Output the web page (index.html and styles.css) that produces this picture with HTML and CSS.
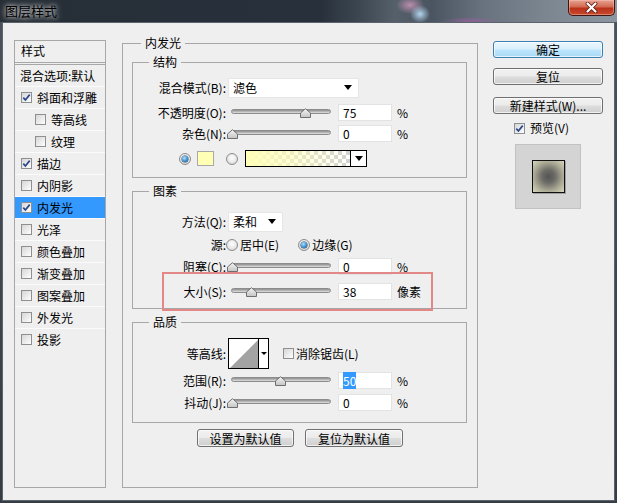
FILE: index.html
```html
<!DOCTYPE html>
<html lang="zh-CN">
<head>
<meta charset="utf-8">
<title>图层样式</title>
<link rel="stylesheet" href="styles.css">
</head>
<body>
<div class="window">
  <header class="titlebar">
    <span class="title">图层样式</span>
    <div class="close-btn">
      <svg width="13" height="11" viewBox="0 0 13 11"><path d="M2.5 1.5 L10.5 9.5 M10.5 1.5 L2.5 9.5" stroke="#5a1a10" stroke-width="3.8" stroke-linecap="round"/><path d="M2.5 1.5 L10.5 9.5 M10.5 1.5 L2.5 9.5" stroke="#fff" stroke-width="2.2" stroke-linecap="round"/></svg>
    </div>
  </header>
  <div class="client">
    <div class="style-list">
      <div class="list-head">样式</div>
      <div class="list-item blend">混合选项:默认</div>
      <div class="list-item"><span class="cb"><svg width="9" height="9" viewBox="0 0 9 9"><path d="M1.3 4.6 L3.4 7 L7.7 1.6" fill="none" stroke="#2c468c" stroke-width="1.7"/></svg></span>斜面和浮雕</div>
      <div class="list-item sub"><span class="cb"></span>等高线</div>
      <div class="list-item sub"><span class="cb"></span>纹理</div>
      <div class="list-item"><span class="cb"><svg width="9" height="9" viewBox="0 0 9 9"><path d="M1.3 4.6 L3.4 7 L7.7 1.6" fill="none" stroke="#2c468c" stroke-width="1.7"/></svg></span>描边</div>
      <div class="list-item"><span class="cb"></span>内阴影</div>
      <div class="list-item selected"><span class="cb"><svg width="9" height="9" viewBox="0 0 9 9"><path d="M1.3 4.6 L3.4 7 L7.7 1.6" fill="none" stroke="#2c468c" stroke-width="1.7"/></svg></span>内发光</div>
      <div class="list-item"><span class="cb"></span>光泽</div>
      <div class="list-item"><span class="cb"></span>颜色叠加</div>
      <div class="list-item"><span class="cb"></span>渐变叠加</div>
      <div class="list-item"><span class="cb"></span>图案叠加</div>
      <div class="list-item"><span class="cb"></span>外发光</div>
      <div class="list-item"><span class="cb"></span>投影</div>
    </div>

    <fieldset class="panel">
      <legend>内发光</legend>

      <fieldset class="group g-structure">
        <legend>结构</legend>
        <div class="row">
          <span class="lbl">混合模式(B):</span>
          <div class="select select-blend"><span>滤色</span><i class="caret"></i></div>
        </div>
        <div class="row mt4">
          <span class="lbl">不透明度(O):</span>
          <div class="slider"><div class="track"></div><svg class="thumb" style="left:69px" width="11" height="10" viewBox="0 0 11 10"><defs><linearGradient id="tg1" x1="0" y1="0" x2="0" y2="1"><stop offset="0" stop-color="#f4f4f4"/><stop offset="1" stop-color="#c4c4c4"/></linearGradient></defs><path d="M0.5 9.5 L0.5 5 L5.5 0.7 L10.5 5 L10.5 9.5 Z" fill="url(#tg1)" stroke="#6e6e6e"/></svg></div>
          <div class="num">75</div>
          <span class="unit">%</span>
        </div>
        <div class="row">
          <span class="lbl">杂色(N):</span>
          <div class="slider"><div class="track"></div><svg class="thumb" style="left:-4px" width="11" height="10" viewBox="0 0 11 10"><path d="M0.5 9.5 L0.5 5 L5.5 0.7 L10.5 5 L10.5 9.5 Z" fill="url(#tg1)" stroke="#6e6e6e"/></svg></div>
          <div class="num">0</div>
          <span class="unit">%</span>
        </div>
        <div class="row mt4 color-row">
          <span class="radio on"><span class="dot"></span></span>
          <span class="swatch"></span>
          <span class="radio radio-gap"></span>
          <div class="gradient"><div class="grad-fill"></div><div class="grad-drop"><i class="caret"></i></div></div>
        </div>
      </fieldset>

      <fieldset class="group g-elements">
        <legend>图素</legend>
        <div class="row">
          <span class="lbl">方法(Q):</span>
          <div class="select select-method"><span>柔和</span><i class="caret"></i></div>
        </div>
        <div class="row mt2">
          <span class="lbl">源:</span>
          <span class="radio"></span>
          <span class="opt">居中(E)</span>
          <span class="radio on radio-gap2"><span class="dot"></span></span>
          <span class="opt">边缘(G)</span>
        </div>
        <div class="row mt1">
          <span class="lbl">阻塞(C):</span>
          <div class="slider"><div class="track"></div><svg class="thumb" style="left:-4px" width="11" height="10" viewBox="0 0 11 10"><path d="M0.5 9.5 L0.5 5 L5.5 0.7 L10.5 5 L10.5 9.5 Z" fill="url(#tg1)" stroke="#6e6e6e"/></svg></div>
          <div class="num">0</div>
          <span class="unit">%</span>
        </div>
        <div class="row mt4">
          <span class="lbl">大小(S):</span>
          <div class="slider"><div class="track"></div><svg class="thumb" style="left:15px" width="11" height="10" viewBox="0 0 11 10"><path d="M0.5 9.5 L0.5 5 L5.5 0.7 L10.5 5 L10.5 9.5 Z" fill="url(#tg1)" stroke="#6e6e6e"/></svg></div>
          <div class="num">38</div>
          <span class="unit">像素</span>
        </div>
      </fieldset>

      <fieldset class="group g-quality">
        <legend>品质</legend>
        <div class="row tall">
          <span class="lbl">等高线:</span>
          <div class="contour">
            <svg class="contour-curve" width="29" height="29" viewBox="0 0 29 29"><rect width="29" height="29" fill="#fff"/><path d="M1 29 L29 1 L29 29 Z" fill="#a3a3a3"/></svg>
            <div class="contour-drop"><i class="caret small"></i></div>
          </div>
          <span class="cb cb-gap"></span>
          <span class="opt">消除锯齿(L)</span>
        </div>
        <div class="row mt1">
          <span class="lbl">范围(R):</span>
          <div class="slider"><div class="track"></div><svg class="thumb" style="left:44px" width="11" height="10" viewBox="0 0 11 10"><path d="M0.5 9.5 L0.5 5 L5.5 0.7 L10.5 5 L10.5 9.5 Z" fill="url(#tg1)" stroke="#6e6e6e"/></svg></div>
          <div class="num"><span class="sel">50</span></div>
          <span class="unit">%</span>
        </div>
        <div class="row mt1">
          <span class="lbl">抖动(J):</span>
          <div class="slider"><div class="track"></div><svg class="thumb" style="left:-4px" width="11" height="10" viewBox="0 0 11 10"><path d="M0.5 9.5 L0.5 5 L5.5 0.7 L10.5 5 L10.5 9.5 Z" fill="url(#tg1)" stroke="#6e6e6e"/></svg></div>
          <div class="num">0</div>
          <span class="unit">%</span>
        </div>
      </fieldset>

      <div class="default-buttons">
        <button class="btn btn-default-set">设置为默认值</button>
        <button class="btn btn-default-reset">复位为默认值</button>
      </div>
    </fieldset>

    <div class="side">
      <button class="btn btn-ok">确定</button>
      <button class="btn btn-reset">复位</button>
      <button class="btn btn-new">新建样式(W)...</button>
      <div class="preview-check"><span class="cb"><svg width="9" height="9" viewBox="0 0 9 9"><path d="M1.3 4.6 L3.4 7 L7.7 1.6" fill="none" stroke="#2c468c" stroke-width="1.7"/></svg></span><span class="opt">预览(V)</span></div>
      <div class="preview-box"><div class="preview-swatch"></div></div>
    </div>
  </div>
  <div class="highlight"></div>
</div>
</body>
</html>
```

FILE: styles.css
```css
* { box-sizing: border-box; }

html, body {
  margin: 0;
  padding: 0;
}

body {
  width: 617px;
  height: 503px;
  overflow: hidden;
  background: #39414a;
  font-family: "Noto Sans CJK SC", "Noto Sans", "Liberation Sans", sans-serif;
  font-size: 12px;
  color: #000;
}

.window {
  position: relative;
  width: 617px;
  height: 503px;
  display: flex;
  flex-direction: column;
  padding: 0 2px 2px 2px;
  background: linear-gradient(180deg, #4a535d 0%, #3d454e 60%, #353c44 100%);
}

/* ---------- title bar ---------- */
.titlebar {
  flex: none;
  height: 22px;
  margin: 0 -2px;
  display: flex;
  justify-content: space-between;
  align-items: flex-start;
  background:
    radial-gradient(ellipse 10px 9px at 420px 14px, rgba(185, 218, 245, 0.95), rgba(185, 218, 245, 0)),
    radial-gradient(ellipse 14px 9px at 410px 5px, rgba(205, 150, 185, 0.85), rgba(205, 150, 185, 0)),
    radial-gradient(ellipse 30px 4px at 470px 21px, rgba(170, 90, 170, 0.6), rgba(170, 90, 170, 0)),
    linear-gradient(90deg, #262d35 0%, #27303a 30%, #28313b 52%, #3c4651 58%, #55606b 64%, #4a5561 70%, #67727e 78%, #7a8590 88%, #8c96a0 100%);
}

.title {
  padding-left: 5px;
  line-height: 22px;
  font-size: 13px;
  color: #000;
  text-shadow: 0 0 4px rgba(255, 255, 255, 0.9), 0 0 8px rgba(255, 255, 255, 0.6);
}

.close-btn {
  width: 47px;
  height: 16px;
  margin-right: 2px;
  display: flex;
  align-items: center;
  justify-content: center;
  border: 1px solid #3d1710;
  border-top: none;
  border-radius: 0 0 5px 5px;
  background: linear-gradient(180deg, #e6a493 0%, #d36a52 45%, #b9321a 55%, #c9492d 100%);
  box-shadow: inset 0 0 0 1px rgba(255, 200, 190, 0.45);
}

/* ---------- client area ---------- */
.client {
  flex: 1;
  display: flex;
  align-items: stretch;
  padding: 12px 11px;
  background: #efefef;
  border: 1px solid #5b636c;
}

/* ---------- left style list ---------- */
.style-list {
  flex: none;
  width: 92px;
  margin-top: 5px;
  border: 1px solid #a7a7a7;
  background: #efefef;
}

.list-head {
  height: 24px;
  padding-left: 6px;
  line-height: 19px;
  border-bottom: 3px double #a7a7a7;
}

.list-item {
  height: 22px;
  display: flex;
  align-items: center;
  padding-left: 6px;
  border-top: 1px solid #fbfbfb;
  white-space: nowrap;
}

.list-item.blend {
  height: 21px;
  padding-left: 5px;
  border-top: none;
}

.list-item.sub {
  padding-left: 20px;
}

.list-item.selected {
  background: #3399ff;
}

.list-item .cb {
  margin-right: 5px;
}

/* checkbox */
.cb {
  flex: none;
  width: 11px;
  height: 11px;
  display: flex;
  align-items: center;
  justify-content: center;
  border: 1px solid #8e8f8f;
  background: linear-gradient(135deg, #d6d6d6 0%, #f2f2f2 70%, #ffffff 100%);
}

/* ---------- middle panel ---------- */
.panel {
  flex: none;
  width: 356px;
  min-width: 0;
  margin: 0 0 0 16px;
  padding: 3px 0 0 0;
  border: 1px solid #a7a7a7;
}

.panel > legend {
  margin-left: 18px;
  padding: 0 4px;
  line-height: 16px;
}

.group {
  min-width: 0;
  margin: 0 10px 0 9px;
  border: 1px solid #a7a7a7;
}

.group > legend {
  margin-left: 16px;
  padding: 0 4px;
  line-height: 16px;
}

.g-structure { padding: 7px 0 8px 0; }
.g-elements { margin-top: 5px; padding: 12px 0 6px 0; }
.g-quality { margin-top: 5px; padding: 8px 0 9px 0; }

.row {
  height: 21px;
  display: flex;
  align-items: center;
  white-space: nowrap;
}

.row.tall { height: 31px; }
.mt1 { margin-top: 1px; }
.mt2 { margin-top: 2px; }
.mt4 { margin-top: 4px; }

.lbl {
  flex: none;
  width: 93px;
  text-align: right;
  line-height: 16px;
}

/* dropdown */
.select {
  flex: none;
  height: 20px;
  margin-left: 2px;
  display: flex;
  align-items: center;
  justify-content: space-between;
  padding: 0 6px 0 4px;
  background: #fff;
  border: 1px solid #e6e6e6;
  line-height: 16px;
}

.select-blend { width: 131px; }
.select-method { width: 55px; }

.caret {
  display: block;
  width: 0;
  height: 0;
  border-left: 4px solid transparent;
  border-right: 4px solid transparent;
  border-top: 5px solid #000;
}

.caret.small {
  border-left-width: 3px;
  border-right-width: 3px;
  border-top-width: 3px;
}

/* slider */
.slider {
  flex: none;
  position: relative;
  width: 100px;
  height: 12px;
  margin-left: 5px;
}

.track {
  margin-top: 2px;
  height: 5px;
  border-radius: 3px;
  border: 1px solid #8c8c8c;
  background: linear-gradient(180deg, #8e8e8e 0%, #bdbdbd 60%, #e2e2e2 100%);
}

.thumb {
  position: absolute;
  top: 1px;
}

/* numeric field */
.num {
  flex: none;
  width: 54px;
  height: 17px;
  margin-left: 7px;
  padding-left: 4px;
  background: #fff;
  border: 1px solid #e3e3e3;
  line-height: 15px;
}

.sel {
  background: #3399ff;
  color: #fff;
}

.unit {
  margin-left: 5px;
  line-height: 16px;
}

.opt {
  line-height: 16px;
  margin-left: 2px;
}

/* radio */
.radio {
  flex: none;
  width: 12px;
  height: 12px;
  display: flex;
  align-items: center;
  justify-content: center;
  border-radius: 50%;
  border: 1px solid #8c8c8c;
  background: radial-gradient(circle at 50% 40%, #ffffff 0%, #e8e8e8 55%, #c6c6c6 100%);
}

.radio .dot {
  width: 6px;
  height: 6px;
  border-radius: 50%;
  background: radial-gradient(circle at 40% 35%, #b4e6ff 0%, #3a8fd0 55%, #0d4a82 100%);
  box-shadow: 0 0 0 0.5px #1b3f66;
}

.color-row { padding-left: 46px; }

.swatch {
  flex: none;
  width: 17px;
  height: 15px;
  margin-left: 6px;
  background: #ffffb6;
  border: 1px solid #a8a8a8;
}

.radio-gap { margin-left: 12px; }
.radio-gap2 { margin-left: 19px; }

.gradient {
  flex: none;
  width: 122px;
  height: 17px;
  margin-left: 7px;
  display: flex;
  border: 1px solid #000;
}

.grad-fill {
  flex: 1;
  background:
    linear-gradient(90deg, #ffffb8 0%, rgba(255, 255, 184, 0.6) 45%, rgba(255, 255, 184, 0) 100%),
    repeating-conic-gradient(#d2d2d2 0 25%, #ffffff 0 50%) 0 0 / 8px 8px;
}

.grad-drop {
  flex: none;
  width: 16px;
  display: flex;
  align-items: center;
  justify-content: center;
  background: #fff;
  border-left: 1px solid #000;
}

/* contour */
.contour {
  flex: none;
  width: 41px;
  height: 31px;
  margin-left: 2px;
  display: flex;
  border: 1px solid #000;
}

.contour-curve { display: block; flex: none; }

.contour-drop {
  flex: 1;
  display: flex;
  align-items: center;
  justify-content: center;
  background: #fff;
  border-left: 1px solid #000;
}

.cb-gap { margin-left: 14px; }

/* default buttons row */
.default-buttons {
  margin-top: 6px;
  display: flex;
  justify-content: center;
  gap: 11px;
}

.btn {
  height: 18px;
  padding: 0;
  font-family: inherit;
  font-size: 12px;
  line-height: 15px;
  color: #000;
  border: 1px solid #707070;
  border-radius: 3px;
  background: linear-gradient(180deg, #f2f2f2 0%, #ebebeb 48%, #dddddd 52%, #cfcfcf 100%);
  box-shadow: inset 0 0 0 1px rgba(255, 255, 255, 0.7);
}

.btn-default-set { width: 97px; }
.btn-default-reset { width: 98px; }

/* ---------- right column ---------- */
.side {
  flex: none;
  width: 110px;
  margin-left: 15px;
  display: flex;
  flex-direction: column;
}

.side .btn {
  width: 110px;
  height: 17px;
}

.btn-ok {
  margin-top: 6px;
  border-color: #3c7fb1;
  background: linear-gradient(180deg, #eaf6fd 0%, #d9f0fc 48%, #bee6fd 52%, #a7d9f5 100%);
}

.btn-reset { margin-top: 10px; }
.btn-new { margin-top: 12px; }

.preview-check {
  margin-top: 6px;
  height: 16px;
  display: flex;
  align-items: center;
  padding-left: 21px;
}

.preview-check .opt { margin-left: 5px; }

.preview-box {
  margin: 8px 0 0 22px;
  width: 66px;
  height: 65px;
  display: flex;
  align-items: center;
  justify-content: center;
  background: #d4d4d4;
  border: 1px solid #c2c2c2;
}

.preview-swatch {
  width: 33px;
  height: 33px;
  border: 1px solid #101010;
  background: radial-gradient(circle, #545454 0%, #6c6b66 30%, #a9a894 65%, #d9d8bd 100%);
  box-shadow: 1px 1px 0 rgba(0, 0, 0, 0.25);
}

/* ---------- annotation overlay ---------- */
.highlight {
  position: absolute;
  left: 162px;
  top: 272px;
  width: 271px;
  height: 39px;
  border: 2px solid #e38787;
  pointer-events: none;
}
```
